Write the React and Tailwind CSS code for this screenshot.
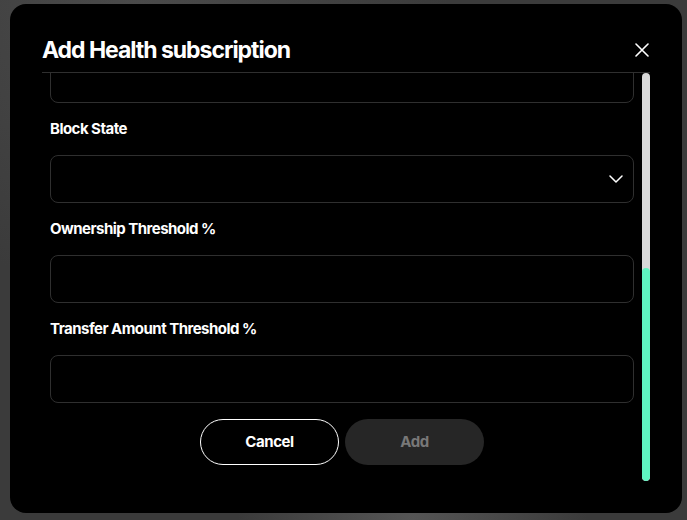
import React from "react";

function Field({ label, children }) {
  return (
    <div className="flex flex-col">
      <div className="h-[20px] leading-[21px] text-[15px] font-bold text-white tracking-[-0.035em]">{label}</div>
      <div className="mt-[17px]">{children}</div>
    </div>
  );
}

function Input() {
  return <div className="h-[48px] rounded-[8px] border border-[#2f2f2f] bg-black" />;
}

export default function App() {
  return (
    <div
      className="w-full h-[520px] overflow-hidden bg-[#3b3b3b] bg-[radial-gradient(ellipse_at_20%_0%,#4a4a4a,transparent_40%),radial-gradient(ellipse_at_60%_100%,#555,transparent_30%)] pt-[4px] pl-[10px]"
      style={{ fontFamily: "Inter, 'Liberation Sans', sans-serif" }}
    >
      <div className="w-[672px] h-[509px] rounded-[16px] bg-black flex flex-col px-[32px] pt-[30px] pb-[32px]">
        <div className="flex items-center justify-between h-[32px]">
          <h2 className="text-[23px] leading-[32px] font-bold text-white tracking-[-0.045em]">Add Health subscription</h2>
          <button className="w-[20px] h-[20px] flex items-center justify-center mr-[-2px]">
            <svg width="14" height="14" viewBox="0 0 14 14" fill="none" stroke="white" strokeWidth="1.6" strokeLinecap="round">
              <path d="M1 1L13 13M13 1L1 13" />
            </svg>
          </button>
        </div>
        <div className="mt-[6px] w-[608px] border-t border-[#2f2f2f] flex flex-1 min-h-0">
          <div className="flex-1 overflow-hidden px-[8px]">
            <div className="mt-[-18px] flex flex-col">
              <Input />
              <div className="mt-[15px]">
                <Field label="Block State">
                  <div className="h-[48px] rounded-[8px] border border-[#2f2f2f] bg-black flex items-center justify-end pr-[10px]">
                    <svg width="14" height="8" viewBox="0 0 14 8" fill="none" stroke="white" strokeWidth="1.5" strokeLinecap="round" strokeLinejoin="round">
                      <path d="M1 1L7 7L13 1" />
                    </svg>
                  </div>
                </Field>
              </div>
              <div className="mt-[15px]">
                <Field label="Ownership Threshold %">
                  <Input />
                </Field>
              </div>
              <div className="mt-[15px]">
                <Field label="Transfer Amount Threshold %">
                  <Input />
                </Field>
              </div>
              <div className="mt-[16px] flex justify-center gap-[6px]">
                <button className="w-[139px] h-[46px] rounded-full border border-white text-white text-[15px] font-bold tracking-[-0.03em]">
                  Cancel
                </button>
                <button className="w-[139px] h-[46px] rounded-full bg-[#262626] text-[#787878] text-[15px] font-bold tracking-[-0.03em]">
                  Add
                </button>
              </div>
            </div>
          </div>
          <div className="w-[8px] h-[408px] flex flex-col rounded-full overflow-hidden bg-[#d9d9d9]">
            <div className="h-[195px]" />
            <div className="flex-1 rounded-full bg-[#5ef5c0]" />
          </div>
        </div>
      </div>
    </div>
  );
}
